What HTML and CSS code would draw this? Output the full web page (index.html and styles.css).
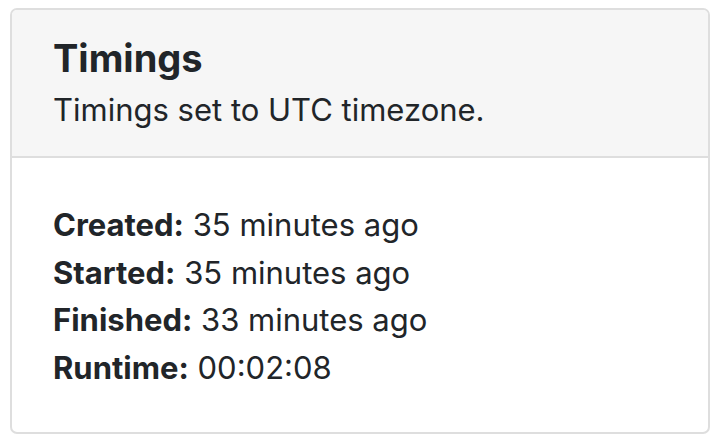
FILE: index.html
```html
<!DOCTYPE html>
<html>
<head>
<meta charset="utf-8">
<link rel="stylesheet" href="styles.css">
</head>
<body>
<div class="card">
  <div class="card-header">
    <h2 class="title">Timings</h2>
    <p class="subtitle">Timings set to UTC timezone.</p>
  </div>
  <div class="card-body">
    <div class="row"><strong>Created:</strong> 35 minutes ago</div>
    <div class="row"><strong>Started:</strong> 35 minutes ago</div>
    <div class="row"><strong>Finished:</strong> 33 minutes ago</div>
    <div class="row"><strong>Runtime:</strong> 00:02:08</div>
  </div>
</div>
</body>
</html>
```
FILE: styles.css
```css
html, body {
  margin: 0;
  padding: 0;
  background: #ffffff;
}
body {
  padding: 8px 10px;
  font-family: Inter, "Noto Sans", sans-serif;
  color: #212529;
}
.card {
  width: 700px;
  height: 426px;
  box-sizing: border-box;
  border: 2px solid #dedede;
  border-radius: 7px;
  overflow: hidden;
  display: flex;
  flex-direction: column;
}
.card-header {
  background: #f6f6f6;
  border-bottom: 2px solid #dedede;
  padding: 25px 41px 24px;
  display: flex;
  flex-direction: column;
}
.title {
  margin: 0;
  font-size: 38px;
  font-weight: 700;
  line-height: 46px;
}
.subtitle {
  margin: 7px 0 0;
  font-size: 31px;
  line-height: 44px;
}
.card-body {
  padding: 43px 41px 0;
  display: flex;
  flex-direction: column;
  font-size: 31px;
  line-height: 47.5px;
}
.row strong {
  font-weight: 700;
}
```
